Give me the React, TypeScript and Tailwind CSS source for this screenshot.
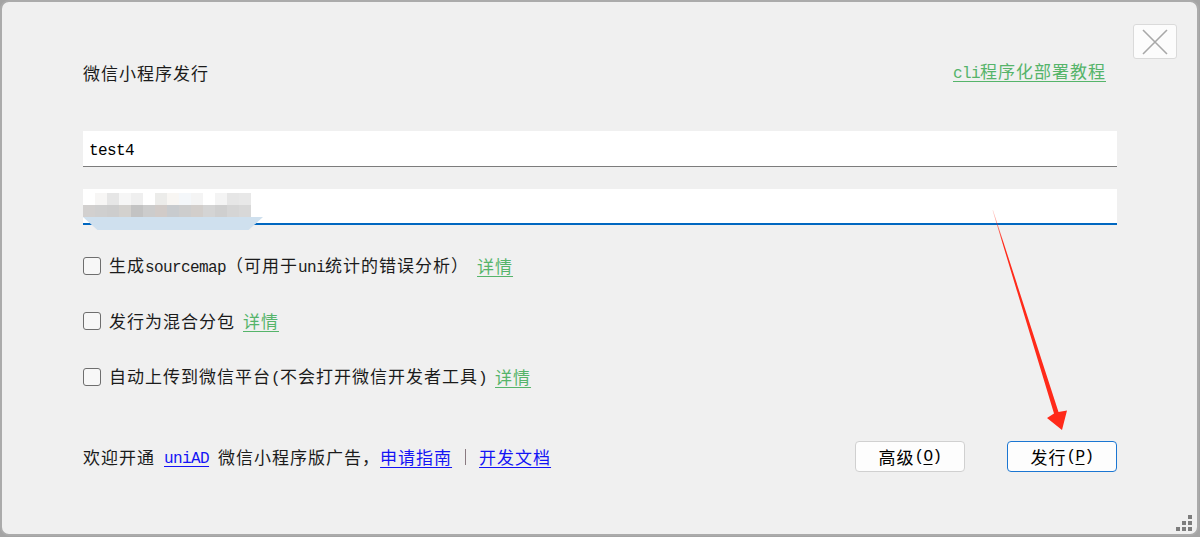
import React from 'react';

const cjk = { fontFamily: '"Noto Sans CJK SC", "Noto Sans", sans-serif' };

const M: React.FC<{ children: React.ReactNode }> = ({ children }) => (
  <span className="font-['Liberation_Mono',monospace] text-[16px] tracking-[-0.6px] whitespace-pre">{children}</span>
);

const Detail: React.FC = () => (
  <a className="ml-2 text-[#55b46a] underline underline-offset-[3px] decoration-1 cursor-pointer">详情</a>
);

const Checkbox: React.FC = () => (
  <span className="w-[18px] h-[18px] rounded-[3px] border border-[#6e6e6e] bg-[#f7f7f7] shrink-0 mr-2" />
);

const row1 = ['#ffffff', '#f7f6f5', '#e6e6e6', '#f6f6f6', '#efefef', '#ffffff', '#ececea', '#f8f6f3', '#f4f7fa', '#f4f4f4', '#ffffff', '#f4f4f4', '#e6e6e6', '#e8e8e8'];
const row2 = ['#d2d0cf', '#cfcfcf', '#cdcdcd', '#d3d1ce', '#c3c3c3', '#cccccc', '#d1cbc8', '#c8cbce', '#cdcdcd', '#d2cecb', '#d4d4d4', '#cfcfcf', '#d5d5d5', '#d8d8d8'];

const Blurred: React.FC = () => (
  <div className="flex flex-col mt-[4px]">
    <div className="flex">
      {row1.map((c, i) => (
        <span key={i} className="w-[12px] h-[12px]" style={{ background: c }} />
      ))}
    </div>
    <div className="flex">
      {row2.map((c, i) => (
        <span key={i} className="w-[12px] h-[12px]" style={{ background: c }} />
      ))}
    </div>
    <div className="w-[180px] h-[13px] bg-[#cfe0ee] [clip-path:polygon(0_0,100%_0,92%_100%,8%_100%)]" />
  </div>
);

const App: React.FC = () => {
  return (
    <div className="w-[1200px] h-[537px] bg-[#a4a4a4] overflow-hidden" style={cjk}>
      <div className="relative w-[1199px] h-[536px] bg-[#f0f0f0] border-2 border-[#ababab] rounded-[9px] flex flex-col text-[17px] tracking-[1px] text-[#1b1b1b]">
        <div className="flex justify-end pt-[22px] pr-[20px]">
          <button className="w-[44px] h-[35px] bg-[#fcfcfc] border border-[#dadada] rounded-[3px] flex items-center justify-center">
            <svg width="26" height="26" viewBox="0 0 26 26">
              <path d="M1 1 L25 25 M25 1 L1 25" stroke="#a8a8a8" strokeWidth="1.6" />
            </svg>
          </button>
        </div>
        <div className="flex flex-col pl-[81px] pr-[80px]">
          <div className="mt-[2px] h-[24px] flex items-center justify-between">
            <span>微信小程序发行</span>
            <a className="mr-[11px] -mt-[3px] text-[#55b46a] underline underline-offset-[3px] decoration-1">
              <M>cli</M>程序化部署教程
            </a>
          </div>

          <div className="mt-[46px] h-[36px] bg-white border-b border-[#7c7c7c] flex items-center pl-[6px] pt-[4px]">
            <span className="font-['Liberation_Mono',monospace] text-[16px] tracking-[-0.6px] text-black">test4</span>
          </div>

          <div className="mt-[22px] h-[36px] bg-white border-b-2 border-[#0067c0] flex items-start">
            <Blurred />
          </div>

          <div className="mt-[29px] h-[24px] flex items-center">
            <Checkbox />
            <span>
              生成<M>sourcemap</M>（可用于<M>uni</M>统计的错误分析）
            </span>
            <Detail />
          </div>

          <div className="mt-[31px] h-[24px] flex items-center">
            <Checkbox />
            <span>发行为混合分包</span>
            <Detail />
          </div>

          <div className="mt-[32px] h-[24px] flex items-center">
            <Checkbox />
            <span>
              自动上传到微信平台<M>(</M>不会打开微信开发者工具<M>)</M>
            </span>
            <Detail />
          </div>

          <div className="mt-[52px] h-[31px] flex items-center">
            <div className="flex-1 flex items-center">
              <span>欢迎开通</span>
              <M> </M>
              <a className="text-[#1414f5] underline underline-offset-[3px] decoration-1">
                <M>uniAD</M>
              </a>
              <M> </M>
              <span>微信小程序版广告，</span>
              <a className="text-[#1414f5] underline underline-offset-[3px] decoration-1">申请指南</a>
              <span className="mx-[13px] w-px h-[16px] bg-[#8a7a80]" />
              <a className="text-[#1414f5] underline underline-offset-[3px] decoration-1">开发文档</a>
            </div>
            <button className="w-[110px] h-[31px] bg-[#fdfdfd] border border-[#d0d0d0] rounded-[4px] flex items-center justify-center text-black">
              高级<M>(</M><span className="font-['Liberation_Mono',monospace] text-[16px] tracking-[-0.6px] underline underline-offset-[3px]">O</span><M>)</M>
            </button>
            <button className="ml-[42px] w-[110px] h-[31px] bg-[#fdfdfd] border border-[#1b76d2] rounded-[4px] flex items-center justify-center text-black">
              发行<M>(</M><span className="font-['Liberation_Mono',monospace] text-[16px] tracking-[-0.6px] underline underline-offset-[3px]">P</span><M>)</M>
            </button>
          </div>
        </div>

        <svg className="absolute left-[-2px] top-[-2px] pointer-events-none" width="1200" height="537" viewBox="0 0 1200 537">
          <defs>
            <linearGradient id="shaft" x1="993" y1="210" x2="1062" y2="430" gradientUnits="userSpaceOnUse">
              <stop offset="0" stopColor="#ff2a1a" stopOpacity="0.2" />
              <stop offset="0.15" stopColor="#ff2a1a" stopOpacity="1" />
              <stop offset="1" stopColor="#ff2a1a" stopOpacity="1" />
            </linearGradient>
          </defs>
          <polygon
            points="993,210 1058.5,412 1067,410.5 1062,430 1047,418 1054,413.5 992.6,210.5"
            fill="url(#shaft)"
          />
          <g fill="#7d7d7d">
            <rect x="1188" y="515" width="4" height="4" />
            <rect x="1182" y="521" width="4" height="4" />
            <rect x="1188" y="521" width="4" height="4" />
            <rect x="1176" y="527" width="4" height="4" />
            <rect x="1182" y="527" width="4" height="4" />
            <rect x="1188" y="527" width="4" height="4" />
          </g>
        </svg>
      </div>
    </div>
  );
};

export default App;
